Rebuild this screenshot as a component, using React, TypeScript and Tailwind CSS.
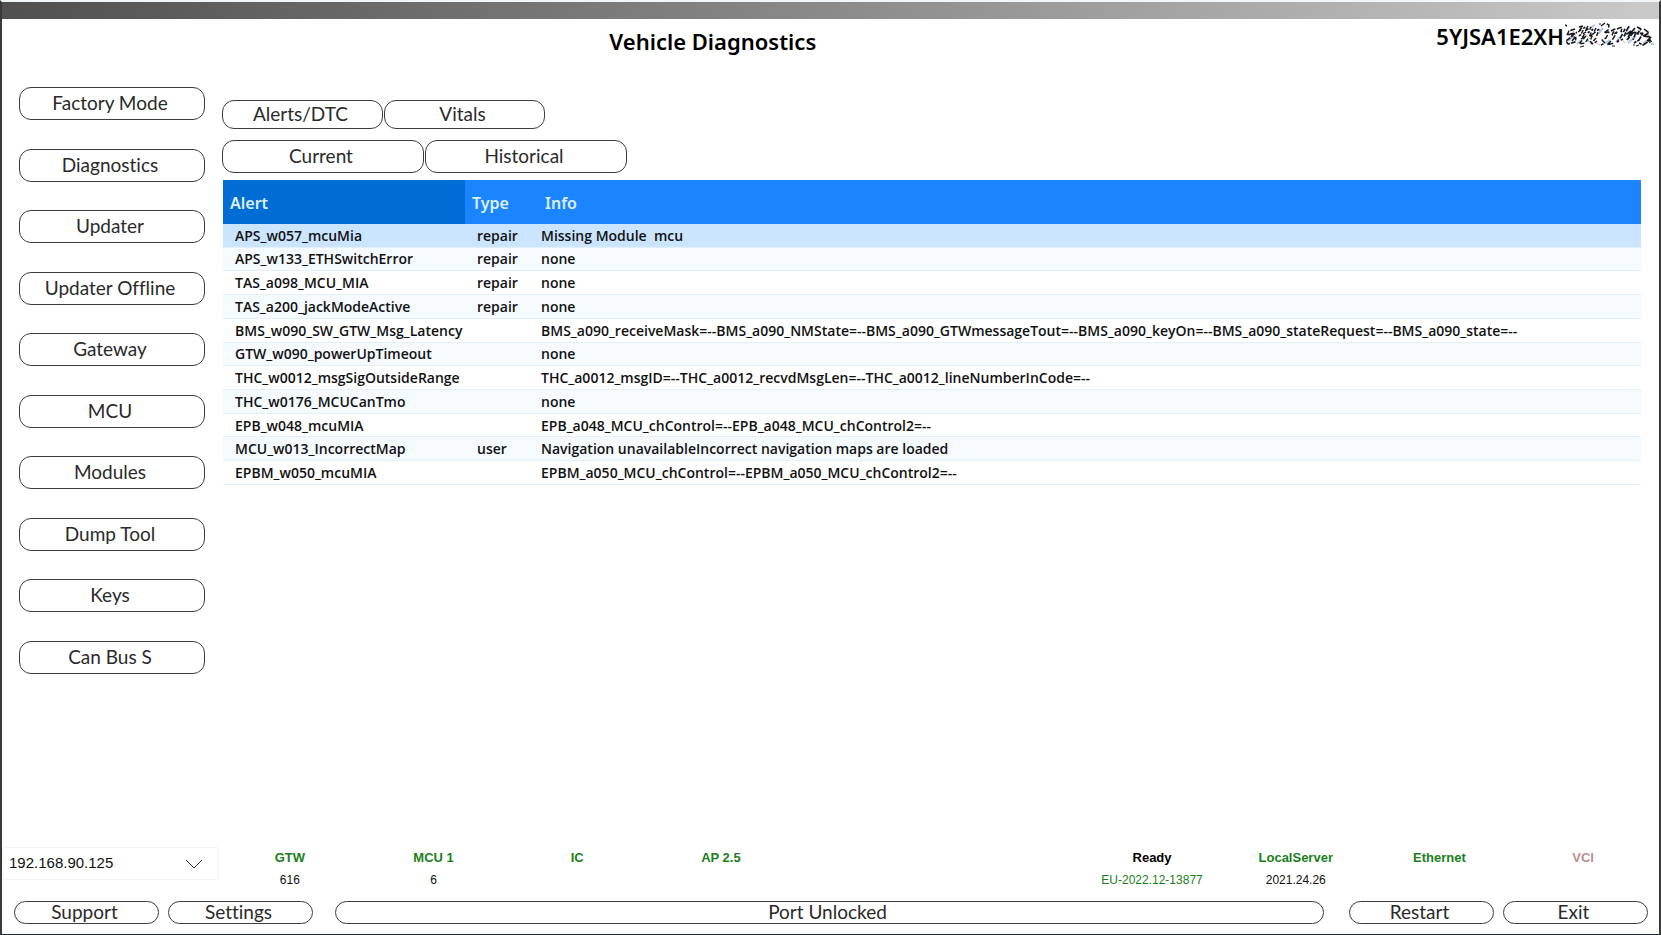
import { ReactNode } from 'react';

const navItems = [
  'Factory Mode',
  'Diagnostics',
  'Updater',
  'Updater Offline',
  'Gateway',
  'MCU',
  'Modules',
  'Dump Tool',
  'Keys',
  'Can Bus S',
];

const alerts = [
  { name: 'APS_w057_mcuMia', type: 'repair', info: 'Missing Module  mcu' },
  { name: 'APS_w133_ETHSwitchError', type: 'repair', info: 'none' },
  { name: 'TAS_a098_MCU_MIA', type: 'repair', info: 'none' },
  { name: 'TAS_a200_jackModeActive', type: 'repair', info: 'none' },
  {
    name: 'BMS_w090_SW_GTW_Msg_Latency',
    type: '',
    info: 'BMS_a090_receiveMask=--BMS_a090_NMState=--BMS_a090_GTWmessageTout=--BMS_a090_keyOn=--BMS_a090_stateRequest=--BMS_a090_state=--',
  },
  { name: 'GTW_w090_powerUpTimeout', type: '', info: 'none' },
  {
    name: 'THC_w0012_msgSigOutsideRange',
    type: '',
    info: 'THC_a0012_msgID=--THC_a0012_recvdMsgLen=--THC_a0012_lineNumberInCode=--',
  },
  { name: 'THC_w0176_MCUCanTmo', type: '', info: 'none' },
  { name: 'EPB_w048_mcuMIA', type: '', info: 'EPB_a048_MCU_chControl=--EPB_a048_MCU_chControl2=--' },
  {
    name: 'MCU_w013_IncorrectMap',
    type: 'user',
    info: 'Navigation unavailableIncorrect navigation maps are loaded',
  },
  { name: 'EPBM_w050_mcuMIA', type: '', info: 'EPBM_a050_MCU_chControl=--EPBM_a050_MCU_chControl2=--' },
];

const statuses = [
  { label: 'GTW', value: '616', color: 'text-[#1a7f1a]' },
  { label: 'MCU 1', value: '6', color: 'text-[#1a7f1a]' },
  { label: 'IC', value: '', color: 'text-[#1a7f1a]' },
  { label: 'AP 2.5', value: '', color: 'text-[#1a7f1a]' },
  null,
  null,
  { label: 'Ready', value: 'EU-2022.12-13877', color: 'text-black', valueColor: 'text-[#1a7f1a]' },
  { label: 'LocalServer', value: '2021.24.26', color: 'text-[#1a7f1a]' },
  { label: 'Ethernet', value: '', color: 'text-[#1a7f1a]' },
  { label: 'VCI', value: '', color: 'text-[#bc8f8f]' },
];

const PillButton = ({ className, children }: { className: string; children: ReactNode }) => (
  <button
    type="button"
    className={`flex items-center justify-center border border-[#3c3c3c] bg-white pr-1 pb-0.5 font-[Lato,sans-serif] text-[19px] leading-none whitespace-nowrap text-[#2a2a2a] [font-variant-ligatures:none] ${className}`}
  >
    {children}
  </button>
);

/* Scribble hiding the end of the VIN */
const Scribble = () => (
  <svg width="90" height="28" viewBox="0 0 90 28" fill="none" strokeLinejoin="bevel" aria-hidden="true">
    <path
      d="M3 19l6-5M12 22l7-6M25 6l5-3M22 18l6 4M33 12l5-6M38 22l7-4M51 20l6-7M60 9l5-4M63 21l8-7M73 8l4 5M78 21l7-3M86 22h3"
      stroke="#a9c9ea"
      strokeWidth="2"
    />
    <path d="M8 9l4 3M20 12l5 5M30 20l5 3M47 10l4 4M56 17l4 4M69 8l3 5M81 10l3 4" stroke="#d6b48c" strokeWidth="1" />
    <path
      d="M10 7L4 9l-2 4 7-2-3 4-5 4 2 3 7-2 1-4-4-2 5-4M0 3l2 1M7 19l4-5"
      stroke="#14161c"
      strokeWidth="1.5"
      strokeDasharray="5 1"
    />
    <path
      d="M14 5l4-1-5 6 7-5-4 7-2 2 7-4-5 7 5-3-7 8 6-1 4-6M23 4l-3 5 6-4-3 6 5-4-4 8 4-3-3 7 3 3 4-3M31 6l-3 6 6-5-3 9-5 6"
      stroke="#14161c"
      strokeWidth="1.4"
      strokeDasharray="4 2"
    />
    <path
      d="M36 4l4-3 4 2-1 5-4 3 5-1-3 6-4 2 3 3-4 2M46 9l4-2-3 6 5-3-4 7-6 6 7-2M52 7l5-2-1 5 4-3-4 8-4 5 6-3"
      stroke="#14161c"
      strokeWidth="1.5"
      strokeDasharray="5 2"
    />
    <path
      d="M64 4l-5 10 7-5-4 9 6-7M70 6l-5 6 6-2-3 8M72 5l4 2-4 5 6-1-4 7-5 3M79 7l5 4-6 3 8 1-4 4 4-1-8 5-4-2"
      stroke="#14161c"
      strokeWidth="1.6"
      strokeDasharray="6 1"
    />
    <path d="M15 25l4-1M47 24h3M68 23h2M71 24l3-1M84 21l3-2M34 2h2" stroke="#14161c" />
  </svg>
);

export default function App() {
  return (
    <div className="flex min-h-screen flex-col border-x-2 border-t-2 border-b border-x-[#3a3a3a] border-t-[#f3f6f9] border-b-[#1d2b38] bg-white font-['Noto_Sans',sans-serif] text-black">
      <div className="h-[17px] bg-linear-to-r from-[#505050] to-[#cacaca]" />

      <header className="flex items-start pr-1 text-[22px] leading-8">
        <h1 className="w-[86%] pt-[6px] text-center font-semibold">Vehicle Diagnostics</h1>
        <div className="flex grow items-start justify-end gap-px">
          <span className="pt-px font-semibold">5YJSA1E2XH</span>
          <span className="shrink-0 pt-[3px]">
            <Scribble />
          </span>
        </div>
      </header>

      <div className="flex grow items-start">
        <nav className="mt-[30px] ml-[17px] flex h-[587px] w-[186px] shrink-0 flex-col justify-between">
          {navItems.map((item) => (
            <PillButton key={item} className="h-[33px] rounded-[12px]">
              {item}
            </PillButton>
          ))}
        </nav>

        <main className="mt-[43px] mr-[18px] ml-[17px] min-w-0 grow">
          <div className="flex gap-px">
            <PillButton className="h-[29px] w-[161px] rounded-[12px]">Alerts/DTC</PillButton>
            <PillButton className="h-[29px] w-[161px] rounded-[12px]">Vitals</PillButton>
          </div>
          <div className="mt-[11px] flex gap-px">
            <PillButton className="h-[33px] w-[202px] rounded-[12px]">Current</PillButton>
            <PillButton className="h-[33px] w-[202px] rounded-[12px]">Historical</PillButton>
          </div>

          <div className="mt-[7px] pl-px">
            <table className="h-[305px] w-full table-fixed border-collapse text-left">
              <thead>
                <tr className="h-[44px] bg-[#1a85ff] text-[16px] leading-5 text-[#dcefff]">
                  <th className="w-[242px] bg-[#006dd4] pt-0.5 pl-[7px] font-semibold">Alert</th>
                  <th className="w-[70px] pt-0.5 pl-[7px] font-semibold">Type</th>
                  <th className="pt-0.5 pl-[10px] font-semibold">Info</th>
                </tr>
              </thead>
              <tbody className="font-['Open_Sans',sans-serif] text-[14px] leading-4 font-semibold text-[#111]">
                {alerts.map((alert) => (
                  <tr
                    key={alert.name}
                    className="border-b border-[#e3effa] first:bg-[#cbe4ff] even:bg-[#f5faff]"
                  >
                    <td className="pt-px pl-3">{alert.name}</td>
                    <td className="pt-px pl-3">{alert.type}</td>
                    <td className="pt-px pl-[6px] whitespace-pre">{alert.info}</td>
                  </tr>
                ))}
              </tbody>
            </table>
          </div>
        </main>
      </div>

      <footer className="font-['Liberation_Sans',sans-serif]">
        <div className="flex items-start pr-1">
          <div className="relative w-[216px]">
            <select
              aria-label="IP address"
              className="h-[33px] w-full appearance-none border border-[#f2f4fc] bg-white pl-[6px] text-[15px] text-[#111]"
            >
              <option>192.168.90.125</option>
            </select>
            <svg
              className="pointer-events-none absolute top-3 right-[15px]"
              width="18"
              height="10"
              viewBox="0 0 18 10"
              fill="none"
              stroke="#333"
              aria-hidden="true"
            >
              <path d="M1 1l8 8 8-8" />
            </svg>
          </div>
          <dl className="grid grow grid-cols-10 text-center">
            {statuses.map((status, i) => (
              <div key={i}>
                {status && (
                  <>
                    <dt className={`pt-[3px] text-[13px] leading-4 font-bold ${status.color}`}>{status.label}</dt>
                    <dd className={`mt-[6px] text-[12px] leading-4 ${status.valueColor ?? 'text-[#111]'}`}>
                      {status.value}
                    </dd>
                  </>
                )}
              </div>
            ))}
          </dl>
        </div>

        <div className="mt-[13px] mb-[10px] flex pr-[11px] pl-3">
          <PillButton className="h-[23px] w-[145px] rounded-full">Support</PillButton>
          <PillButton className="ml-[9px] h-[23px] w-[145px] rounded-full">Settings</PillButton>
          <PillButton className="mr-[25px] ml-[22px] h-[23px] grow rounded-full">Port Unlocked</PillButton>
          <PillButton className="h-[23px] w-[145px] rounded-full">Restart</PillButton>
          <PillButton className="ml-[9px] h-[23px] w-[145px] rounded-full">Exit</PillButton>
        </div>
      </footer>
    </div>
  );
}
